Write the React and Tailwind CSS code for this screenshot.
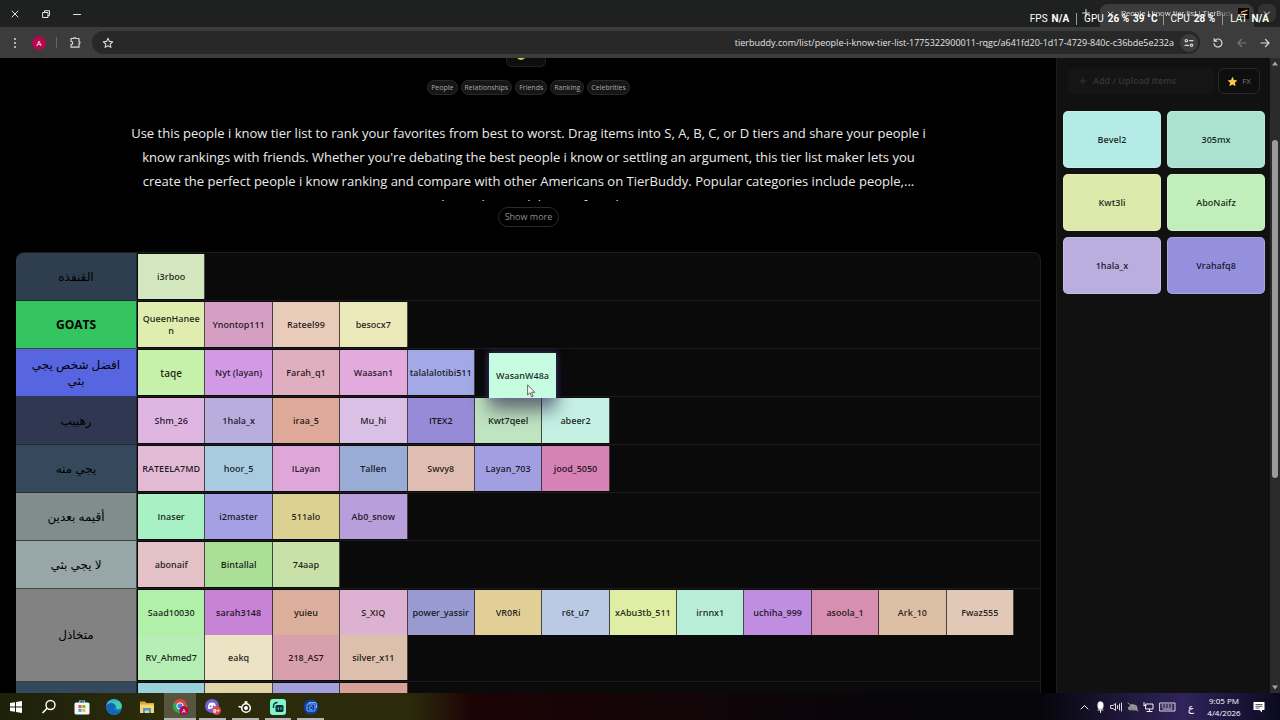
import React from "react";

const rows = [
  { label: "القنفذه", color: "bg-[#2e3e4e]", tiles: [["i3rboo", "bg-[#d3e8bf]"]] },
  {
    label: "GOATS",
    color: "bg-[#34c460]",
    weight: "font-bold",
    tiles: [
      ["QueenHanee\nn", "bg-[#e0edae]"],
      ["Ynontop111", "bg-[#d59fc3]"],
      ["Rateel99", "bg-[#e8cbb9]"],
      ["besocx7", "bg-[#ebe8ba]"],
    ],
  },
  {
    label: "افضل شخص يجي بثي",
    color: "bg-[#5766e0]",
    tiles: [
      ["taqe", "bg-[#c6f1ab]", "text-[10px]"],
      ["Nyt (layan)", "bg-[#d299e4]"],
      ["Farah_q1", "bg-[#e0afbf]"],
      ["Waasan1", "bg-[#e3aadd]"],
      ["talalalotibi511", "bg-[#a3a9e6]"],
    ],
  },
  {
    label: "رهيبب",
    color: "bg-[#303750]",
    tiles: [
      ["Shm_26", "bg-[#dfb5e2]"],
      ["1hala_x", "bg-[#b8addd]"],
      ["iraa_5", "bg-[#dea999]"],
      ["Mu_hi", "bg-[#dac0e6]"],
      ["ITEX2", "bg-[#978bd7]"],
      ["Kwt7qeel", "bg-[#bfe4c1]"],
      ["abeer2", "bg-[#c5f1e4]"],
    ],
  },
  {
    label: "يجي منه",
    color: "bg-[#35495d]",
    tiles: [
      ["RATEELA7MD", "bg-[#e3bad6]"],
      ["hoor_5", "bg-[#a9cbe2]"],
      ["ILayan", "bg-[#dfa6da]"],
      ["Tallen", "bg-[#99acd5]"],
      ["Swvy8", "bg-[#e0bdb3]"],
      ["Layan_703", "bg-[#a19fe1]"],
      ["jood_5050", "bg-[#d682b7]"],
    ],
  },
  {
    label: "أقيمه بعدين",
    color: "bg-[#7f8d8d]",
    tiles: [
      ["Inaser", "bg-[#a7f1c5]"],
      ["i2master", "bg-[#a5a0e4]"],
      ["511alo", "bg-[#dcd190]"],
      ["Ab0_snow", "bg-[#b89edb]"],
    ],
  },
  {
    label: "لا يجي بثي",
    color: "bg-[#97a7a7]",
    tiles: [
      ["abonaif", "bg-[#e4c0c7]"],
      ["Bintallal", "bg-[#a9df97]"],
      ["74aap", "bg-[#c7e1a9]"],
    ],
  },
  {
    label: "متخاذل",
    color: "bg-[#828282]",
    tiles: [
      ["Saad10030", "bg-[#b1f0a9]"],
      ["sarah3148", "bg-[#c783d5]"],
      ["yuieu", "bg-[#dcae9c]"],
      ["S_XIQ", "bg-[#dcb1d1]"],
      ["power_yassir", "bg-[#989ad0]"],
      ["VR0Ri", "bg-[#e2cf98]"],
      ["r6t_u7", "bg-[#bbcae4]"],
      ["xAbu3tb_511", "bg-[#e0eda4]"],
      ["irnnx1", "bg-[#b8eed8]"],
      ["uchiha_999", "bg-[#c08ee0]"],
      ["asoola_1", "bg-[#d78fb1]"],
      ["Ark_10", "bg-[#ddbfa5]"],
      ["Fwaz555", "bg-[#e2c8b6]"],
      ["RV_Ahmed7", "bg-[#b7eeb5]"],
      ["eakq", "bg-[#ece2c4]"],
      ["218_AS7", "bg-[#d89fac]"],
      ["silver_x11", "bg-[#dcc0ad]"],
    ],
  },
  {
    label: "",
    color: "bg-[#35495e]",
    tiles: [
      ["", "bg-[#97d2dd]"],
      ["", "bg-[#e0d5a6]"],
      ["", "bg-[#a3a1dc]"],
      ["", "bg-[#d9a097]"],
    ],
  },
];

const pool = [
  ["Bevel2", "bg-[#b5ebe7]"],
  ["305mx", "bg-[#abe1cf]"],
  ["Kwt3li", "bg-[#dce9aa]"],
  ["AboNaifz", "bg-[#c1efbb]"],
  ["1hala_x", "bg-[#b9aedd]"],
  ["Vrahafq8", "bg-[#9590dd]"],
];

const tags = ["People", "Relationships", "Friends", "Ranking", "Celebrities"];

const stroke = { fill: "none", stroke: "currentColor", strokeLinecap: "round", strokeLinejoin: "round" };

function TitleBar() {
  return (
    <header className="relative flex h-[27px] shrink-0 items-center justify-between bg-[#1f2120] text-[#e3e3e3]">
      <div className="flex items-center gap-[21px] pl-[10px]">
        <button aria-label="Close window" className="block">
          <svg width="10" height="10" viewBox="0 0 10 10" {...stroke}><path d="M2 2l6 6M8 2l-6 6" /></svg>
        </button>
        <button aria-label="Restore window" className="block">
          <svg width="10" height="10" viewBox="0 0 10 10" {...stroke}><path d="M2 3.5h5v5H2zM3.5 3.5V1.7h5v5H7" /></svg>
        </button>
        <button aria-label="Minimize window" className="block">
          <svg width="10" height="10" viewBox="0 0 10 10" {...stroke}><path d="M1.5 5.5h7" /></svg>
        </button>
      </div>
      <div className="flex h-full items-end gap-[4px] pr-[4px]">
        <button aria-label="New tab" className="mb-[9px] mr-[5px] block">
          <svg width="10" height="10" viewBox="0 0 10 10" {...stroke}><path d="M5 1.500v7M1.500 5h7" /></svg>
        </button>
        <div className="flex h-[23px] w-[154px] items-center gap-[4px] rounded-t-lg bg-[#3c3c3c] px-[5px] pb-[4px]">
          <button aria-label="Close tab" className="block">
            <svg width="10" height="10" viewBox="0 0 10 10" {...stroke}><path d="M3 3l4.500 4.500M7.500 3L3 7.500" /></svg>
          </button>
          <span className="min-w-0 flex-1 overflow-hidden whitespace-nowrap bg-linear-to-r from-[#e3e3e3] from-85% to-transparent bg-clip-text pl-[2px] font-[Roboto,sans-serif] text-[8px] leading-[14px] text-transparent">
            People I know tier list | TierBuddy
          </span>
          <svg className="shrink-0" width="11" height="11" viewBox="0 0 11 11">
            <rect width="11" height="11" fill="#050505" />
            <path d="M3 3.500L9.500 1.500v1.500L3 5z" fill="#e8a13a" />
            <path d="M2 5.500h6L7 7H2z" fill="#d6473a" />
            <path d="M2 7.700h4L5 9.500H2z" fill="#46b34f" />
          </svg>
        </div>
        <button aria-label="Search tabs" className="mb-[5px] flex size-[18px] items-center justify-center rounded-md bg-[#333]">
          <svg width="10" height="10" viewBox="0 0 10 10" {...stroke}><path d="M2.500 4l2.500 2.500L7.500 4" /></svg>
        </button>
      </div>
      <div className="absolute right-[11px] top-[11px] z-10 flex items-center gap-[4px] whitespace-nowrap font-[Roboto,sans-serif] text-[10px] leading-[16px] text-white">
        <span>FPS</span><b>N/A</b>
        <i className="mx-[3px] h-[12px] w-px bg-[#999]" />
        <span>GPU</span><b>26 %</b><b>39 °C</b>
        <i className="mx-[2px] h-[12px] w-px bg-[#999]" />
        <span>CPU</span><b>28 %</b>
        <i className="mx-[3px] h-[12px] w-px bg-[#999]" />
        <span>LAT</span><b>N/A</b>
      </div>
    </header>
  );
}

function Toolbar() {
  return (
    <div className="flex h-[31px] shrink-0 items-center bg-[#3c3c3c] pl-[9px] pr-[9px] text-[#d8d8d8]">
      <button aria-label="Menu" className="block">
        <svg width="12" height="12" viewBox="0 0 12 12" fill="currentColor">
          <circle cx="6" cy="2" r="1" /><circle cx="6" cy="6" r="1" /><circle cx="6" cy="10" r="1" />
        </svg>
      </button>
      <button aria-label="Profile" className="ml-[11px] flex size-[14px] items-center justify-center rounded-full bg-[#b5064f] text-[8px] leading-none text-white">A</button>
      <span className="ml-[10px] h-[11px] w-px bg-[#666]" />
      <button aria-label="Extensions" className="ml-[12px] block">
        <svg width="13" height="13" viewBox="0 0 13 13" {...stroke} strokeWidth="1.200">
          <path d="M2 2.500h2.800a1 1 0 0 1 2 0h3.200v3.100a1 1 0 0 1 0 2v3.600H2V8.700a1.700 1.700 0 0 0 0-3.400z" />
        </svg>
      </button>
      <div className="ml-[10px] flex h-[23px] min-w-0 flex-1 items-center gap-[8px] rounded-full bg-[#282828] pl-[10px] pr-[2px]">
        <button aria-label="Bookmark this page" className="block">
          <svg width="12" height="12" viewBox="0 0 12 12" {...stroke} strokeWidth="1.100">
            <path d="M6 1.300l1.400 3.100 3.300.4-2.500 2.200.7 3.400L6 8.700l-2.900 1.700.7-3.400L1.300 4.800l3.300-.4z" />
          </svg>
        </button>
        <input
          aria-label="Address"
          readOnly
          value="tierbuddy.com/list/people-i-know-tier-list-1775322900011-rqgc/a641fd20-1d17-4729-840c-c36bde5e232a"
          className="min-w-0 flex-1 bg-transparent text-right text-[9px] leading-[16px] text-[#e4e4e4] outline-none"
        />
        <button aria-label="Site information" className="-ml-[2px] flex size-[18px] items-center justify-center rounded-full bg-[#3d3d3d]">
          <svg width="10" height="10" viewBox="0 0 10 10" {...stroke} strokeWidth="1.200">
            <circle cx="2.300" cy="2.700" r="1.200" /><path d="M5.500 2.700h3.500M1 7.300h3.500" /><circle cx="7.500" cy="7.300" r="1.200" />
          </svg>
        </button>
      </div>
      <button aria-label="Reload" className="ml-[12px] block">
        <svg width="12" height="12" viewBox="0 0 12 12" {...stroke} strokeWidth="1.200">
          <path d="M2.500 4A4 4 0 1 1 2 6.500M2.200 1.500v2.700h2.700" />
        </svg>
      </button>
      <button aria-label="Back" className="ml-[12px] block text-[#777]">
        <svg width="12" height="12" viewBox="0 0 12 12" {...stroke} strokeWidth="1.200"><path d="M10 6H2M5.500 2.500L2 6l3.500 3.500" /></svg>
      </button>
      <button aria-label="Forward" className="ml-[11px] block">
        <svg width="12" height="12" viewBox="0 0 12 12" {...stroke} strokeWidth="1.200"><path d="M2 6h8M6.500 2.500L10 6 6.500 9.500" /></svg>
      </button>
    </div>
  );
}

function Tile({ tile: [name, color, size = "text-[9px]"] }) {
  return (
    <li className={`flex h-[45px] items-center justify-center whitespace-pre border-r border-[#222]/80 text-center font-semibold leading-[12px] text-black/85 ${size} ${color}`}>
      {name}
    </li>
  );
}

function Row({ row }) {
  return (
    <section className="flex border-b border-[#1c1c1c]">
      <h2 dir="auto" className={`-mb-px flex w-[121px] shrink-0 items-center justify-center border-b border-r border-[#222]/70 px-[8px] text-center text-[12px] leading-[16px] text-black ${row.weight || "font-medium"} ${row.color}`}>
        {row.label}
      </h2>
      <ul className="grid flex-1 grid-cols-[repeat(13,minmax(0,1fr))] py-px pl-px pr-[26px]">
        {row.tiles.map((t, i) => <Tile key={i} tile={t} />)}
      </ul>
    </section>
  );
}

function Main() {
  return (
    <main className="relative min-w-0 flex-1 overflow-hidden bg-black pl-[16px] pr-[15px]">
      <div className="flex flex-col items-center">
        <div className="mr-[5px] flex h-[9px] w-[40px] items-start justify-center rounded-b-md border border-t-0 border-[#222] bg-[#0d0d0d]">
          <svg className="-ml-[10px]" width="8" height="3" viewBox="0 0 8 3"><path d="M0 0h8Q4 4 0 0" fill="#d9c545" /></svg>
        </div>
        <ul className="mt-[13px] flex gap-[3px]">
          {tags.map((t) => (
            <li key={t} className="rounded-full border border-[#2a2a2a] bg-[#161616] px-[3px] text-[7px] leading-[13px] text-[#a8a8a8]">{t}</li>
          ))}
        </ul>
        <p className="mt-[26px] h-[80px] overflow-hidden text-center text-[13px] leading-[24px] text-[#ececec]">
          Use this people i know tier list to rank your favorites from best to worst. Drag items into S, A, B, C, or D tiers and share your people i<br />
          know rankings with friends. Whether you're debating the best people i know or settling an argument, this tier list maker lets you<br />
          create the perfect people i know ranking and compare with other Americans on TierBuddy. Popular categories include people,...<br />
          relationships, celebrities, friends.
        </p>
        <button className="mt-[6px] h-[20px] rounded-full border border-[#2b2b2b] px-[6px] text-[9px] leading-[16px] text-[#8d8d8d]">Show more</button>
      </div>
      <div className="mt-[25px] overflow-hidden rounded-lg border border-l-0 border-[#1c1c1c] bg-[#0a0a0a]">
        {rows.map((r, i) => <Row key={i} row={r} />)}
      </div>
      <div className="absolute left-[489px] top-[295px] flex h-[45px] w-[67px] items-center justify-center bg-[#c6fde0] text-[9px] font-semibold text-black/85 shadow-[0_0_6px_1px_rgba(110,90,200,0.45),0_12px_18px_rgba(20,10,50,0.55)]">
        WasanW48a
        <svg className="absolute left-[38px] top-[31px]" width="9" height="14" viewBox="0 0 9 14">
          <path d="M.6.800v10.200l2.400-2.200 1.600 4 1.500-.6-1.600-3.900h3.300z" fill="#f4f4f4" stroke="#333" strokeWidth=".7" />
        </svg>
      </div>
    </main>
  );
}

function Sidebar() {
  return (
    <aside className="w-[214px] shrink-0 border-l border-[#1d1d1d] bg-[#111] pl-[6px] pr-[5px] pt-[10px]">
      <div className="flex gap-[4px] px-[5px]">
        <button className="flex h-[26px] flex-1 items-center gap-[6px] rounded-md bg-[#151515] pl-[11px] text-[9px] font-semibold text-[#353535]">
          <svg width="8" height="8" viewBox="0 0 8 8" {...stroke}><path d="M4 1v6M1 4h6" /></svg>
          Add / Upload Items
        </button>
        <button className="flex h-[26px] w-[42px] items-center justify-center gap-[4px] rounded-md border border-[#282828] bg-[#0e0e0e] text-[8px] text-[#777]">
          <svg width="11" height="11" viewBox="0 0 12 12"><path d="M6 .800l1.600 3.500 3.800.5-2.800 2.500.8 3.900L6 9.200l-3.400 2 .8-3.900L.600 4.800l3.800-.5z" fill="#fbc94a" /></svg>
          FX
        </button>
      </div>
      <ul className="mt-[17px] grid grid-cols-2 gap-[6px]">
        {pool.map(([name, color]) => (
          <li key={name} className={`flex h-[57px] items-center justify-center rounded-[5px] border border-white/20 text-[9px] font-semibold text-black/85 ${color}`}>{name}</li>
        ))}
      </ul>
    </aside>
  );
}

function Scrollbar() {
  return (
    <div className="flex w-[10px] shrink-0 flex-col items-center justify-between bg-[#2b2b2b] py-[3px]">
      <div className="flex flex-col items-center">
        <svg width="6" height="5" viewBox="0 0 6 5"><path d="M3 .500L6 4.500H0z" fill="#a5a5a5" /></svg>
        <div className="mt-[74px] h-[338px] w-[6px] rounded-full bg-[#9b9b9b]" />
      </div>
      <svg width="6" height="5" viewBox="0 0 6 5"><path d="M3 4.500L6 .500H0z" fill="#a5a5a5" /></svg>
    </div>
  );
}

const apps = [
  ["Start", <><path d="M2 4l5-.8v4.300H2zM8 3l6-1v5.500H8zM2 8.500h5v4.300L2 12zM8 8.500h6V14l-6-1z" fill="#fff" /></>],
  ["Search", <><circle cx="9.500" cy="6" r="4.500" fill="none" stroke="#fff" strokeWidth="1.400" /><path d="M6.200 9.300L1.500 14" stroke="#fff" strokeWidth="1.600" /></>],
  ["Store", <><path d="M5.500 4V1.800h5V4" fill="none" stroke="#46b9e6" strokeWidth="1.200" /><rect x=".500" y="3.500" width="15" height="12" rx="1.500" fill="#f5f5f5" /><path d="M4.500 6h3v3h-3z" fill="#e8503a" /><path d="M8.300 6h3v3h-3z" fill="#7ab82c" /><path d="M4.500 9.800h3v3h-3z" fill="#2aa4e6" /><path d="M8.300 9.800h3v3h-3z" fill="#f6b81c" /></>],
  ["Edge", <><circle cx="8" cy="8" r="8" fill="#1878c8" /><path d="M.500 6C2-1 14-2 16 7c0 4-5 4-6 2 1-3-4-6-9.500-3" fill="#43cfa4" /><path d="M.500 6C6 2 10 5 9.500 8c-3-1-3 5 5 4.500A8 8 0 0 1 .500 6" fill="#1566b5" /><path d="M.500 6C2 0 10-1 13 3 9 2 4 2 .500 6" fill="#34aee0" /></>],
  ["Files", <><path d="M1 2.500h5l1.500 1.500H15v10H1z" fill="#e2a52f" /><path d="M1 5.500h14v8.500H1z" fill="#fbd568" /><path d="M4 9h8v5H10v-2.500H6V14H4z" fill="#3f9be0" /></>],
  ["Chrome", <><circle cx="8" cy="7" r="7" fill="#e5433a" /><path d="M8 7L1.900 3.500A7 7 0 0 0 8 14z" fill="#2fa750" /><path d="M8 7h7a7 7 0 0 1-7 7z" fill="#f6c228" /><circle cx="8" cy="7" r="3.200" fill="#3f83ee" stroke="#fff" /><circle cx="12" cy="11.500" r="4.500" fill="#b5064f" /><text x="12" y="13.500" fontSize="6" fill="#fff" textAnchor="middle">A</text></>],
  ["Discord", <><circle cx="7" cy="7" r="7" fill="#6e62d8" /><path d="M3 9.500Q3 5 4.500 4q2.500-1 5 0Q11 5 11 9.500q-1 1-2 .800l-.6-.8h-2.800l-.6.800q-1 .200-2-.8" fill="#fff" /><circle cx="5.500" cy="7.300" r=".900" fill="#6e62d8" /><circle cx="8.500" cy="7.300" r=".900" fill="#6e62d8" /><circle cx="11.500" cy="11.500" r="4.500" fill="#dc4646" /><text x="11.500" y="13.600" fontSize="6" fontWeight="700" fill="#fff" textAnchor="middle">9+</text></>],
  ["Game tools", <><circle cx="9" cy="9" r="4.300" fill="none" stroke="#fff" strokeWidth="1.600" /><circle cx="9" cy="9" r="2" fill="#fff" /><path d="M9 2.500v2.500M1.500 7.500l3 .800M7.500 3h3" stroke="#fff" strokeWidth="1.500" /></>],
  ["Stream", <><rect width="16" height="16" rx="3" fill="#80f5d2" /><path d="M3.500 9V7.500q0-4 4-4" stroke="#0a3030" strokeWidth="1.400" fill="none" /><rect x="5.500" y="6" width="8" height="7" rx="1.500" fill="#0a3030" /><path d="M8.300 8.500v2M11 8.500v2" stroke="#80f5d2" /></>],
  ["Sync", <><circle cx="8" cy="8" r="7.500" fill="#123f9d" /><rect x="4" y="5" width="8" height="7" rx="1" fill="none" stroke="#79b7fb" /><path d="M6 5V3.500h6q1.500 0 1.500 2V9M9.500 8a1.700 1.700 0 1 0 0 1.500" fill="none" stroke="#79b7fb" /></>],
];

function Taskbar() {
  return (
    <footer className="flex h-[27px] shrink-0 items-stretch justify-between bg-linear-to-r from-[#2b2a0b] from-32% via-[#1c0305] via-37% to-[#06050a] to-72% text-white">
      <nav className="flex w-[327px] bg-linear-to-r from-[#1c2108] via-[#2c2b0d] to-[#2b2a0b]">
        {apps.map(([name, art], i) => (
          <button
            key={name}
            aria-label={name}
            className={`relative flex flex-1 items-center justify-center ${i === 5 ? "bg-white/20" : ""} ${i > 4 ? "after:absolute after:bottom-0 after:h-[2px] after:bg-[#b5b5b5]" : ""} ${i === 5 ? "after:inset-x-0" : "after:inset-x-[3px]"}`}
          >
            <svg width="16" height="16" viewBox="0 0 16 16">{art}</svg>
          </button>
        ))}
      </nav>
      <div className="flex items-center bg-linear-to-r from-transparent via-[#30245c] via-60% to-[#0b0a20] pl-[40px] pr-[15px]">
        <svg width="100" height="14" viewBox="0 0 100 14" {...stroke} stroke="#f0f0f0">
          <path d="M2 9l3.500-3.500L9 9" />
          <rect x="19" y="2" width="5" height="7" rx="2" fill="#fff" /><path d="M21.500 10v2.500M19 10h5" />
          <path d="M32 5.500h2l2.500-2v7l-2.500-2h-2zM38.500 5.500v3M40.500 4v6M42.500 3v8" strokeWidth=".900" />
          <path d="M50 9.500q-2-2 1-3 1-3 4-1.500 3 0 3 3v1.500zM49 3l10 8" fill="#888" stroke="#aaa" strokeWidth=".900" />
          <path d="M67 4h7v5h-7zM65 2.500v3M65 5.500h2M70.500 9v2.500M68 11.500h5" />
          <path d="M81 3h15v8H81zM83 5h1M86 5h1M89 5h1M92 5h1M83 7h1M86 7h1M89 7h1M92 7h1M84 9h9" strokeWidth=".900" />
        </svg>
        <span className="mr-[2px] w-[24px] text-center text-[10px] leading-none">ع</span>
        <div className="w-[38px] whitespace-nowrap text-center text-[8px] leading-[12px]">9:05 PM<br />4/4/2026</div>
        <svg className="ml-[10px]" width="12" height="12" viewBox="0 0 12 12"><path d="M.500 1h11v8H9v2.500L6.500 9h-6z" fill="#fff" /><path d="M2.500 3.500h7M2.500 5.300h7M2.500 7.100h4" stroke="#333" strokeWidth=".800" /></svg>
      </div>
    </footer>
  );
}

export default function App() {
  return (
    <div className="flex h-screen flex-col overflow-hidden bg-black font-['Open_Sans','Noto_Sans','DejaVu_Sans',sans-serif]">
      <TitleBar />
      <Toolbar />
      <div className="flex min-h-0 flex-1">
        <Main />
        <Sidebar />
        <Scrollbar />
      </div>
      <Taskbar />
    </div>
  );
}
